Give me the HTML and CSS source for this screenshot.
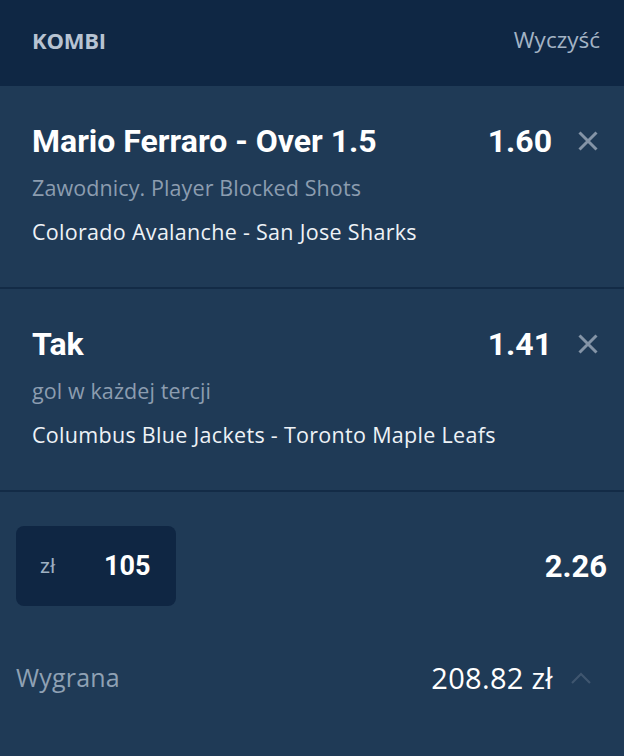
FILE: index.html
```html
<!DOCTYPE html>
<html lang="pl">
<head>
<meta charset="utf-8">
<link rel="stylesheet" href="styles.css">
</head>
<body>
<div class="slip">
  <header class="head">
    <span class="head-title">KOMBI</span>
    <span class="head-clear">Wyczyść</span>
  </header>

  <section class="bet">
    <div class="bet-top">
      <span class="bet-title">Mario Ferraro - Over 1.5</span>
      <span class="bet-odds">1.60</span>
      <svg class="bet-x" viewBox="0 0 20 20" width="20" height="20"><path d="M1.5 1.5 L18.5 18.5 M18.5 1.5 L1.5 18.5" stroke="#8494a7" stroke-width="3" fill="none"/></svg>
    </div>
    <div class="bet-market">Zawodnicy. Player Blocked Shots</div>
    <div class="bet-event">Colorado Avalanche - San Jose Sharks</div>
  </section>

  <section class="bet">
    <div class="bet-top">
      <span class="bet-title">Tak</span>
      <span class="bet-odds">1.41</span>
      <svg class="bet-x" viewBox="0 0 20 20" width="20" height="20"><path d="M1.5 1.5 L18.5 18.5 M18.5 1.5 L1.5 18.5" stroke="#8494a7" stroke-width="3" fill="none"/></svg>
    </div>
    <div class="bet-market">gol w każdej tercji</div>
    <div class="bet-event">Columbus Blue Jackets - Toronto Maple Leafs</div>
  </section>

  <div class="stake-row">
    <div class="stake-box">
      <span class="stake-cur">zł</span>
      <span class="stake-val">105</span>
    </div>
    <span class="total-odds">2.26</span>
  </div>

  <div class="win-row">
    <span class="win-label">Wygrana</span>
    <span class="win-right">
      <span class="win-val">208.82 zł</span>
      <svg class="chev" viewBox="0 0 22 14" width="22" height="14"><path d="M2 12 L11 3 L20 12" stroke="#3f566f" stroke-width="2.2" fill="none"/></svg>
    </span>
  </div>
</div>
</body>
</html>
```

FILE: styles.css
```css
* { box-sizing: border-box; }
html, body { margin: 0; padding: 0; }
body {
  background: #1f3a56;
  width: 624px;
  height: 756px;
  overflow: hidden;
  font-family: "Open Sans", "Noto Sans", sans-serif;
}
.slip { display: flex; flex-direction: column; }

.head {
  height: 86px;
  background: #0f2744;
  display: flex;
  align-items: center;
  justify-content: space-between;
  padding: 0 24px 7px 32px;
}
.head-title {
  font-family: "Open Sans", sans-serif;
  font-weight: 700;
  font-size: 22px;
  color: #b7c3d2;
  letter-spacing: -0.2px;
}
.head-clear {
  font-size: 22.5px;
  color: #a3b3c4;
}

.bet {
  height: 203px;
  padding: 36px 26px 0 32px;
  border-bottom: 2px solid #132b46;
}
.bet-top {
  display: flex;
  align-items: center;
  height: 38px;
}
.bet-title {
  flex: 1;
  font-family: Roboto, sans-serif;
  font-weight: 700;
  font-size: 32px;
  color: #ffffff;
}
.bet-odds {
  font-family: Roboto, sans-serif;
  font-weight: 700;
  font-size: 32px;
  color: #ffffff;
  margin-right: 26px;
}
.bet-x { display: block; }
.bet-market {
  margin-top: 14px;
  height: 28px;
  line-height: 28px;
  font-size: 21.5px;
  color: #8c9db0;
  letter-spacing: 0.1px;
}
.bet-event {
  margin-top: 16px;
  height: 28px;
  line-height: 28px;
  font-size: 21.5px;
  color: #eef2f6;
  letter-spacing: 0.3px;
}

.stake-row {
  display: flex;
  align-items: center;
  justify-content: space-between;
  padding: 34px 17px 0 16px;
}
.stake-box {
  width: 160px;
  height: 80px;
  background: #0f2643;
  border-radius: 8px;
  display: flex;
  align-items: center;
  padding-left: 24px;
}
.stake-cur {
  font-family: Roboto, sans-serif;
  font-size: 20px;
  color: #9fb0c2;
  width: 64px;
}
.stake-val {
  font-family: Roboto, sans-serif;
  font-weight: 700;
  font-size: 27px;
  color: #ffffff;
}
.total-odds {
  font-family: Roboto, sans-serif;
  font-weight: 700;
  font-size: 31px;
  color: #ffffff;
}

.win-row {
  display: flex;
  align-items: center;
  justify-content: space-between;
  padding: 0 32px 0 16px;
  margin-top: 53px;
  height: 36px;
}
.win-label {
  font-size: 25px;
  color: #8fa1b4;
  letter-spacing: 0.2px;
}
.win-right { display: flex; align-items: center; }
.win-val {
  font-size: 29px;
  color: #ffffff;
  margin-right: 17px;
  letter-spacing: 0.3px;
}
.chev { display: block; margin-top: 2px; }
```
